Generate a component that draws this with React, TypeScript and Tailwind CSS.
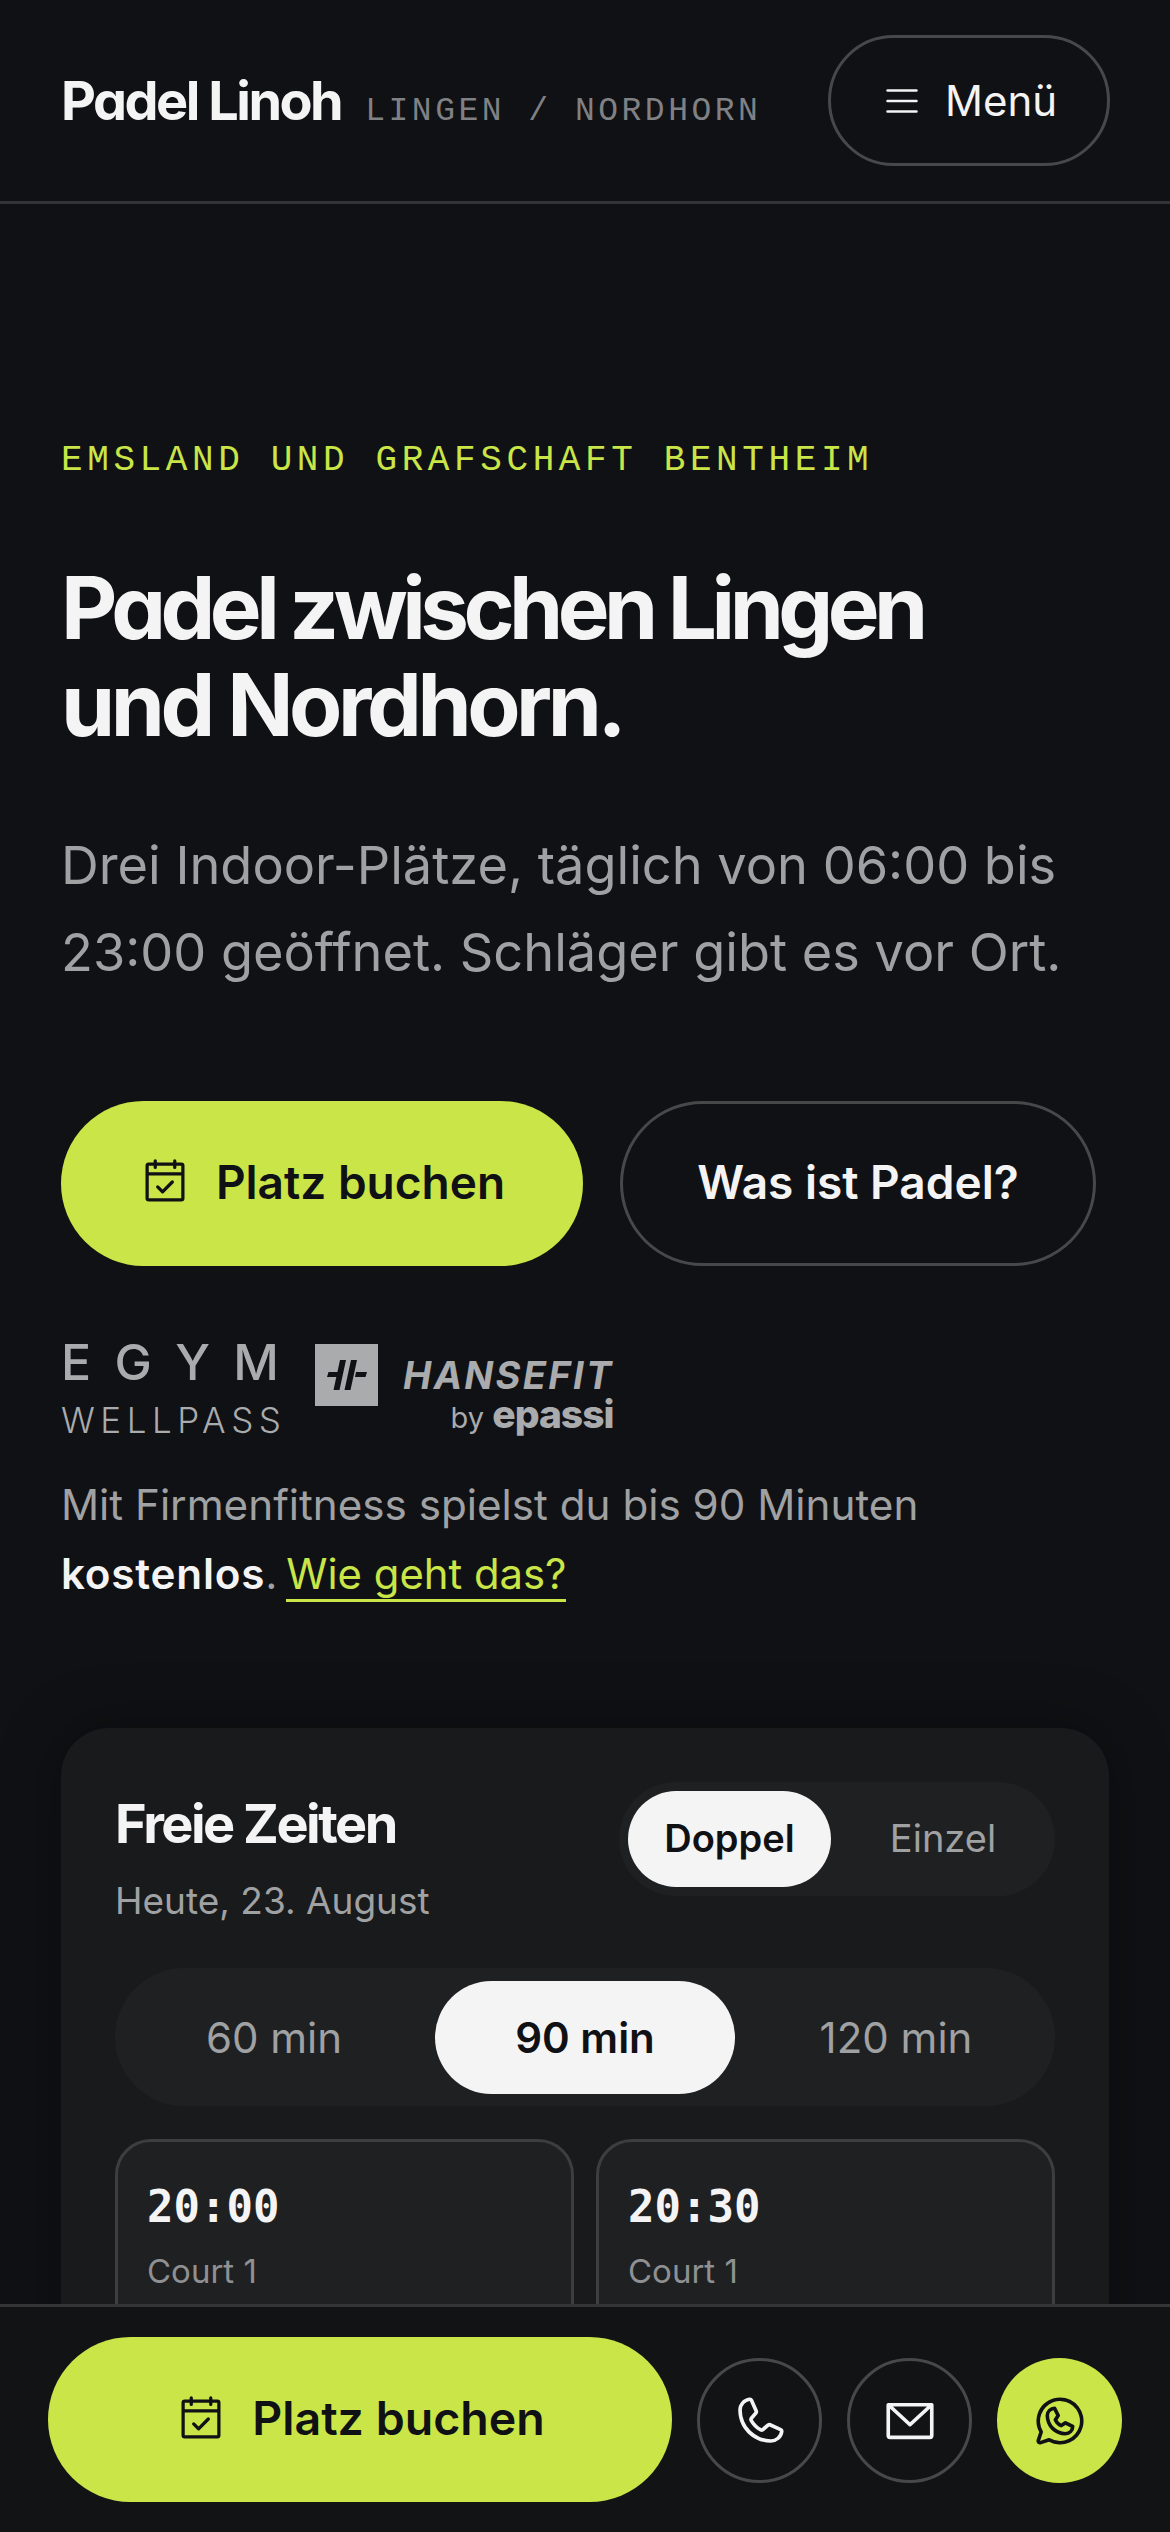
import { PiCalendarCheck, PiEnvelopeSimple, PiList, PiPhone, PiWhatsappLogo } from 'react-icons/pi';

const sans = "font-['Inter','Liberation_Sans',sans-serif]";
const mono = "font-['DejaVu_Sans_Mono','Liberation_Mono',monospace]";
const display = "font-['Inter','Liberation_Sans',sans-serif] [font-feature-settings:'cv11','ss03']";

function HansefitMark() {
  return (
    <div className="flex h-[62px] w-[63px] items-center justify-center bg-[#a9abad]">
      <svg viewBox="0 0 40 30" className="h-[30px] w-[40px]" fill="#101114">
        <path d="M1.5 12h12l-1 5H0zM29 12h11l-1.5 5H28z" />
        <path d="M13 0h6l-6.5 30h-6zM24 0h6l-6.5 30h-6z" />
      </svg>
    </div>
  );
}

function Slot({ time }: { time: string }) {
  return (
    <div className="h-[300px] rounded-[36px] border-[3px] border-[#3d3e40] bg-[#1f2022] px-[29px] pt-[37px]">
      <div className={`${mono} text-[44px] leading-[56px] font-bold text-[#f4f4f5]`}>{time}</div>
      <div className="mt-[12px] text-[33px] leading-[48px] text-[#8f9092]">Court 1</div>
    </div>
  );
}

export default function App() {
  return (
    <div className={`${sans} relative h-[2532px] overflow-hidden bg-[#101114] text-[#f4f4f5]`}>
      <header className="flex h-[204px] items-center justify-between border-b-[3px] border-[#333436] pr-[60px] pl-[61px]">
        <div className="flex items-baseline gap-[24px]">
          <span className={`${display} text-[54px] font-bold tracking-[-2.5px]`}>Padel Linoh</span>
          <span className="font-['Liberation_Mono',monospace] text-[33px] tracking-[3.5px] text-[#808184]">LINGEN / NORDHORN</span>
        </div>
        <button className="flex h-[131px] w-[282px] items-center justify-center gap-[22px] rounded-full border-[3px] border-[#47484a] text-[42px]">
          <PiList className="text-[42px]" />
          Menü
        </button>
      </header>

      <main className="px-[61px] pt-[237px]">
        <p className="font-['Liberation_Mono',monospace] text-[36px] leading-[40px] tracking-[4.6px] text-[#c9e547]">EMSLAND UND GRAFSCHAFT BENTHEIM</p>
        <h1 className={`${display} mt-[78px] text-[87px] leading-[97px] font-bold tracking-[-5.5px]`}>
          Padel zwischen Lingen
          <br />
          <span className="tracking-[-4.4px]">und Nordhorn.</span>
        </h1>
        <p className="mt-[69px] text-[52.3px] leading-[87px] text-[#a0a1a3]">
          Drei Indoor-Plätze, täglich von 06:00 bis
          <br />
          23:00 geöffnet. Schläger gibt es vor Ort.
        </p>

        <div className="mt-[105px] flex gap-[37px]">
          <button className="flex h-[165px] w-[522px] items-center justify-center gap-[25px] rounded-full bg-[#c9e547] pb-[3px] text-[46px] font-semibold text-[#101114]">
            <PiCalendarCheck className="text-[52px]" />
            Platz buchen
          </button>
          <button className="h-[165px] w-[476px] rounded-full border-[3px] border-[#47484a] pb-[3px] text-[46px] font-semibold">Was ist Padel?</button>
        </div>

        <div className="mt-[78px] flex items-start gap-[36px] text-[#a9abad]">
          <div className="w-[218px]">
            <div className="flex justify-between text-[50px] leading-[36px] font-medium">
              <span>E</span>
              <span>G</span>
              <span>Y</span>
              <span>M</span>
            </div>
            <div className="mt-[24px] text-[35px] leading-[32px] font-light tracking-[5.5px] whitespace-nowrap">WELLPASS</div>
          </div>
          <HansefitMark />
          <div className="ml-[-11px] flex flex-col items-end pt-[12px]">
            <div className="text-[38px] leading-[38px] font-bold tracking-[2.3px] italic">HANSEFIT</div>
            <div className="mt-[4px] text-[29px] leading-[32px]">
              by <span className="text-[39px] font-extrabold tracking-[-1px]">epassi</span>
            </div>
          </div>
        </div>

        <p className="mt-[34px] text-[42.2px] leading-[69px] text-[#a0a1a3]">
          Mit Firmenfitness spielst du bis 90 Minuten
          <br />
          <strong className="font-semibold tracking-[0.8px] text-[#f4f4f5]">kostenlos</strong>.{' '}
          <a className="ml-[-3px] border-b-[3px] border-[#c9e547] text-[41.8px] text-[#c9e547]">Wie geht das?</a>
        </p>

        <section className="mt-[119px] rounded-[48px] bg-[#191a1c] px-[54px] pt-[54px] pb-[54px] shadow-[0_0_60px_rgba(0,0,0,0.35)]">
          <div className="flex items-start justify-between">
            <div>
              <h2 className={`${display} mt-[12px] text-[54px] leading-[60px] font-bold tracking-[-2.5px]`}>Freie Zeiten</h2>
              <p className="mt-[24px] text-[37px] leading-[46px] text-[#a0a1a3]">Heute, 23. August</p>
            </div>
            <div className="flex h-[114px] w-[436px] items-center rounded-full bg-[#1f2022] py-[9px] pl-[9px] text-[38px]">
              <span className="flex h-[96px] w-[203px] items-center justify-center rounded-full bg-[#f4f4f5] pb-[2px] font-semibold text-[#101114]">Doppel</span>
              <span className="flex-1 pb-[2px] text-center text-[#a0a1a3]">Einzel</span>
            </div>
          </div>

          <div className="mt-[44px] flex h-[138px] items-center gap-[14px] rounded-full bg-[#1f2022] p-[12px] text-[42px] text-[#a0a1a3]">
            <span className="flex-1 text-center">60 min</span>
            <span className="flex h-[113px] w-[300px] items-center justify-center rounded-full bg-[#f4f4f5] font-semibold text-[#101114]">90 min</span>
            <span className="flex-1 text-center">120 min</span>
          </div>

          <div className="mt-[33px] grid grid-cols-2 gap-[22px]">
            <Slot time="20:00" />
            <Slot time="20:30" />
          </div>
        </section>
      </main>

      <div className="absolute inset-x-0 bottom-0 flex h-[228px] items-start gap-[25px] border-t-[3px] border-[#333436] bg-[#111315] px-[48px] pt-[30px]">
        <button className="flex h-[165px] flex-1 items-center justify-center gap-[25px] rounded-full bg-[#c9e547] pb-[2px] text-[46.5px] font-semibold text-[#101114]">
          <PiCalendarCheck className="text-[52px]" />
          Platz buchen
        </button>
        <button className="mt-[21px] flex size-[125px] items-center justify-center rounded-full border-[3px] border-[#47484a]">
          <PiPhone className="text-[58px]" />
        </button>
        <button className="mt-[21px] flex size-[125px] items-center justify-center rounded-full border-[3px] border-[#47484a]">
          <PiEnvelopeSimple className="text-[58px]" />
        </button>
        <button className="mt-[21px] flex size-[125px] items-center justify-center rounded-full bg-[#c9e547] text-[#101114]">
          <PiWhatsappLogo className="text-[58px]" />
        </button>
      </div>
    </div>
  );
}
